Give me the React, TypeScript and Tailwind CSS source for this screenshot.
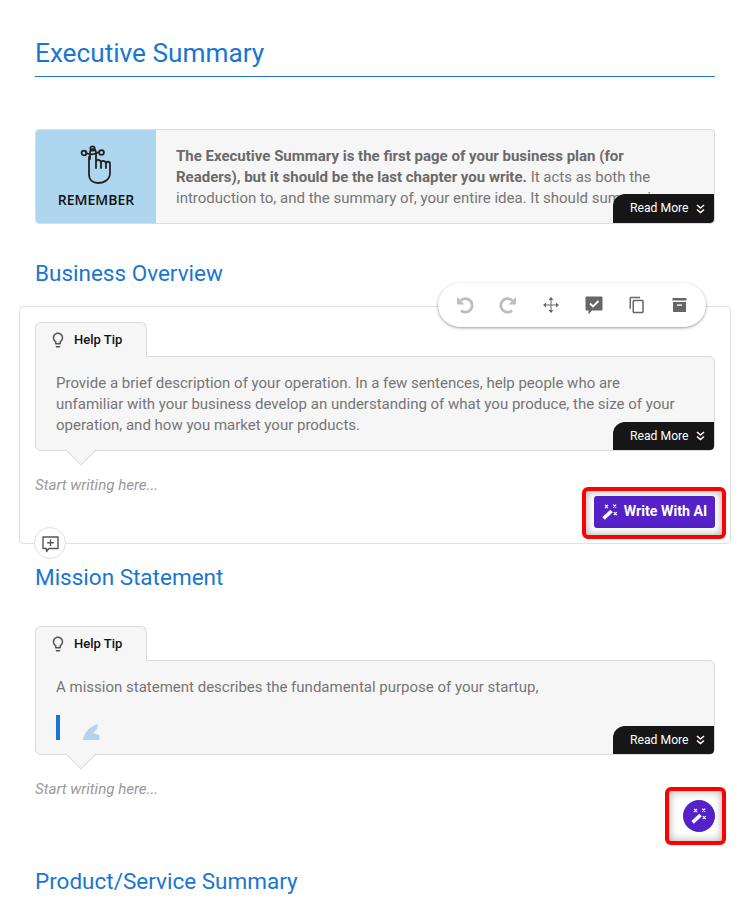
import React from "react";
import { MdContentCopy, MdLightbulbOutline } from "react-icons/md";

function Chevrons() {
  return (
    <svg width="9" height="10" viewBox="0 0 9 10" fill="none" stroke="#fff" strokeWidth="1.6">
      <path d="M1 1 L4.5 4 L8 1" />
      <path d="M1 5.5 L4.5 8.5 L8 5.5" />
    </svg>
  );
}

function Wand({ size = 16 }: { size?: number }) {
  return (
    <svg width={size} height={size} viewBox="0 0 16 16" fill="none" stroke="#fff">
      <path d="M1.6 14.4 L9.6 7" strokeWidth="3.6" />
      <path d="M3 1 L6 4 M6 1 L3 4 M11.2 0.6 L14.2 3.6 M14.2 0.6 L11.2 3.6 M11.8 8.2 L14.8 11.2 M14.8 8.2 L11.8 11.2" strokeWidth="1.2" />
    </svg>
  );
}

function ReadMore({ tall }: { tall?: boolean }) {
  return (
    <div className={`absolute right-0 bottom-0 ${tall ? "h-[29px]" : "h-[28px]"} w-[101px] bg-[#161616] rounded-tl-[12px] rounded-br-[4px] flex items-center pl-[17px] gap-[7px] text-white text-[12.2px]`}>
      <span>Read More</span>
      <Chevrons />
    </div>
  );
}

function Tip({ children }: { children: React.ReactNode }) {
  return (
    <div className="relative">
      <div className="relative z-10 w-[112px] h-[35px] bg-[#f6f6f6] border border-b-0 border-[#dcdcdc] rounded-t-[6px] flex items-center pl-[13px] gap-[7px] text-[13px] font-medium text-[#111]">
        <MdLightbulbOutline size={18} className="text-[#555]" />
        <span>Help Tip</span>
      </div>
      <div className="relative -mt-px h-[95px] bg-[#f6f6f6] border border-[#dcdcdc] rounded-b-[6px] rounded-tr-[6px] pl-5 pr-[34px] pt-4 text-[15px] leading-[21px] text-[#757575]">
        {children}
        <ReadMore />
      </div>
      <div className="absolute left-[35px] bottom-[-10px] w-[22px] h-[22px] rotate-45 bg-[#f6f6f6] border-r border-b border-[#dcdcdc]" />
    </div>
  );
}

function WriteArea() {
  return <div className="mt-6 text-[15.1px] leading-[21px] italic text-[#999]">Start writing here...</div>;
}

function Hand() {
  return (
    <svg width="32" height="40" viewBox="0 0 32 40" fill="none" stroke="#222" strokeWidth="1.8" strokeLinecap="round" strokeLinejoin="round">
      <path d="M9 12 V29 C9 35 13 38 18 38 C25 38 30 34 30 28 V19 C30 16 26 16 26 19 V23 M26 19 C26 15 21 15 21 18 V23 M21 18 C21 14 16 14 16 17 V23 M16 17 V8 C16 3 10 3 10 8 V14" />
      <circle cx="4" cy="8" r="2.4" />
      <path d="M6 8 C10 10 14 10 19 7" />
      <circle cx="21.5" cy="7.5" r="2.4" />
      <circle cx="12.5" cy="3.5" r="2.2" />
    </svg>
  );
}

function UndoIcon({ flip }: { flip?: boolean }) {
  return (
    <svg width="18" height="18" viewBox="0 0 18 18" className={flip ? "-scale-x-100" : ""}>
      <path d="M4.5 4.6 A6.8 6.8 0 1 1 5 14.6" fill="none" stroke="#bdbdbd" strokeWidth="2.8" />
      <path d="M1 1 V8.5 H8.5 Z" fill="#bdbdbd" />
    </svg>
  );
}

function MoveIcon() {
  return (
    <svg width="16" height="16" viewBox="0 0 16 16" fill="#666" stroke="none">
      <path d="M7.5 2 H8.5 V14 H7.5 Z M2 7.5 H14 V8.5 H2 Z" />
      <path d="M8 0 L10.5 3 H5.5 Z M8 16 L10.5 13 H5.5 Z M0 8 L3 5.5 V10.5 Z M16 8 L13 5.5 V10.5 Z" />
    </svg>
  );
}

function ArchiveIcon() {
  return (
    <svg width="15" height="14" viewBox="0 0 15 14">
      <path d="M0.5 0 H14.5 V2.5 H0.5 Z" fill="#666" />
      <path d="M1 4 H14 V14 H1 Z" fill="#666" />
      <path d="M5 6.4 H10 V7.8 H5 Z" fill="#fff" />
    </svg>
  );
}

function CommentPlus() {
  return (
    <svg width="17" height="17" viewBox="0 0 17 17" fill="none" stroke="#555" strokeWidth="1.4" className="mt-[3px]">
      <path d="M1 1 H16 V12.5 H7 L4.5 15.5 V12.5 H1 Z" strokeLinejoin="round" />
      <path d="M8.5 3.5 V10 M5.2 6.8 H11.8" />
    </svg>
  );
}

export default function App() {
  return (
    <div className="relative h-[916px] w-[752px] overflow-hidden bg-white pl-[35px] pr-[37px] font-['Roboto',sans-serif]">
      <h1 className="pt-[38px] h-[77px] text-[26.2px] leading-[30px] text-[#1976d2] border-b border-[#1976d2]">Executive Summary</h1>

      <div className="relative mt-[52px] flex h-[95px] overflow-hidden rounded-[4px] border border-[#dcdcdc] bg-[#f6f6f6]">
        <div className="w-[120px] shrink-0 bg-[#aed6ef] flex flex-col items-center pt-[15px]">
          <Hand />
          <div className="mt-[5px] font-['Open_Sans',sans-serif] text-[14px] leading-[20px] font-semibold text-[#111]">REMEMBER</div>
        </div>
        <div className="pl-5 pr-[34px] pt-4 text-[15px] leading-[21px] text-[#757575]">
          <b className="font-bold text-[#6a6a6a]">The Executive Summary is the first page of your business plan (for Readers), but it should be the last chapter you write.</b> It acts as both the introduction to, and the summary of, your entire idea. It should summarize
        </div>
        <ReadMore tall />
      </div>

      <h2 className="mt-[35px] text-[22.5px] leading-[28px] text-[#1976d2]">Business Overview</h2>

      <div className="relative -mx-4 mt-[19px] h-[238px] rounded-[4px] border border-[#e0e0e0] px-[15px] pt-[15px]">
        <Tip>Provide a brief description of your operation. In a few sentences, help people who are unfamiliar with your business develop an understanding of what you produce, the size of your operation, and how you market your products.</Tip>
        <WriteArea />
        <div className="absolute right-[15px] top-[189px] flex h-[32px] w-[121px] items-center justify-center gap-[6px] rounded-[3px] bg-[#5521c8] text-[14.2px] font-bold text-white">
          <Wand />
          <span>Write With AI</span>
        </div>
        <div className="absolute right-[4px] top-[180px] h-[52px] w-[144px] rounded-[6px] border-4 border-[#f00] shadow-[inset_0_0_8px_rgba(0,0,0,0.35)]" />
        <div className="absolute left-[14px] bottom-[-16px] flex h-[32px] w-[32px] items-center justify-center rounded-full border border-[#e0e0e0] bg-white">
          <CommentPlus />
        </div>
        <div className="absolute right-[24px] top-[-24px] flex h-[44px] w-[268px] items-center rounded-full bg-white pl-[6px] pr-[5px] shadow-[0_1px_3px_rgba(0,0,0,0.4)]">
          <div className="flex flex-1 justify-center"><UndoIcon /></div>
          <div className="flex flex-1 justify-center"><UndoIcon flip /></div>
          <div className="flex flex-1 justify-center"><MoveIcon /></div>
          <div className="flex flex-1 justify-center">
            <svg width="18" height="18" viewBox="0 0 18 18">
              <path d="M1 1 H17 V14 H6.5 L4 17.5 V14 H1 Z" fill="#666" stroke="#666" strokeLinejoin="round" />
              <path d="M5 7.5 L8 10.5 L13.5 5" fill="none" stroke="#fff" strokeWidth="1.8" />
            </svg>
          </div>
          <div className="flex flex-1 justify-center"><MdContentCopy size={18} className="text-[#666]" /></div>
          <div className="flex flex-1 justify-center"><ArchiveIcon /></div>
        </div>
      </div>

      <h2 className="mt-[19px] text-[22.5px] leading-[28px] text-[#1976d2]">Mission Statement</h2>

      <div className="relative mt-[35px]">
        <Tip>
          <div>A mission statement describes the fundamental purpose of your startup,</div>
          <div className="mt-[17px] flex items-end gap-[23px]">
            <div className="h-[25px] w-1 bg-[#1976d2]" />
            <svg width="17" height="16" viewBox="0 0 17 16"><path d="M0 16 C1 8 8 2 15 0 L14 5 L10 9 L16.5 11 L16.5 16 Z" fill="#b6d2ee" /></svg>
          </div>
        </Tip>
        <WriteArea />
        <div className="absolute right-0 top-[174px] flex h-[32px] w-[32px] items-center justify-center rounded-full bg-[#5521c8]">
          <Wand size={16} />
        </div>
        <div className="absolute right-[-11px] top-[161px] h-[58px] w-[61px] rounded-[6px] border-4 border-[#f00] shadow-[inset_0_0_8px_rgba(0,0,0,0.35)]" />
      </div>

      <h2 className="mt-[67px] text-[22.5px] leading-[28px] text-[#1976d2]">Product/Service Summary</h2>
    </div>
  );
}
